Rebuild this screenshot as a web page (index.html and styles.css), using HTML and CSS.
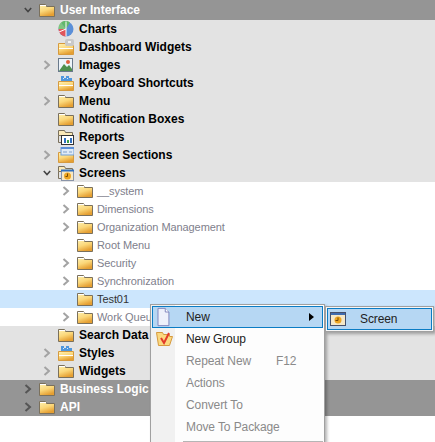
FILE: index.html
```html
<!DOCTYPE html>
<html>
<head>
	<title>User Interface</title>
	<link rel="stylesheet" href="styles.css">
</head>
<body>
	<svg class="defs" width="0" height="0">
		<defs>
			<linearGradient id="folderFill" x1="0" y1="0" x2="0.4" y2="1">
				<stop offset="0" stop-color="#fff2b4"/>
				<stop offset="0.55" stop-color="#fbd779"/>
				<stop offset="1" stop-color="#e59f32"/>
			</linearGradient>
			<symbol id="open" viewBox="0 0 8 10"><path d="M1.5 1 L6 5 L1.5 9" fill="none" stroke="#a3a3a3" stroke-width="2"/></symbol>
			<symbol id="openDark" viewBox="0 0 8 10"><path d="M1.5 1 L6 5 L1.5 9" fill="none" stroke="#555" stroke-width="2"/></symbol>
			<symbol id="down" viewBox="0 0 10 8"><path d="M1 1.5 L5 6 L9 1.5" fill="none" stroke="#444" stroke-width="2"/></symbol>
			<symbol id="folder" viewBox="0 0 16 16">
				<path d="M.5 2.5h6l1 2h8v10H.5z" fill="url(#folderFill)" stroke="#7a705c"/>
				<path d="M1 3.5h6" stroke="#fff" stroke-width="1"/>
			</symbol>
			<symbol id="charts" viewBox="0 0 16 16">
				<circle cx="8" cy="8" r="7.5" fill="#5b8fd8"/>
				<path d="M8 8 L3 1.5 A7.5 7.5 0 0 1 12 1.5z" fill="#62b86a"/>
				<path d="M8 8 L.5 8 A7.5 7.5 0 0 0 8 15.5z" fill="#e0565c"/>
				<path d="M8 8 L3 1.5 A7.5 7.5 0 0 0 .5 8z" fill="#7fc67f"/>
				<path d="M8 .5 L8 15.5 M8 8 L1 11" stroke="#fff" stroke-width="1"/>
			</symbol>
			<symbol id="widgets" viewBox="0 0 16 16">
				<path d="M.5 4.5h8v2h7v9H.5z" fill="url(#folderFill)" stroke="#d69a3e"/>
				<path d="M1 9.5h14" stroke="#fff"/>
				<rect x="7" y="0" width="9" height="7" rx="2" fill="#c9c9c9"/>
				<rect x="10" y="2" width="3" height="2" fill="#f4f4f4"/>
			</symbol>
			<symbol id="images" viewBox="0 0 16 16">
				<rect x=".5" y="1.5" width="14" height="13" fill="#eef4fa" stroke="#6a7a8c"/>
				<path d="M1 14 L6 7 L9 10 L11 8 L14 12 V14z" fill="#4f8f4f"/>
				<circle cx="10" cy="5" r="2" fill="#e0603c"/>
			</symbol>
			<symbol id="keys" viewBox="0 0 16 16">
				<path d="M.5 6.5h15v9H.5z" fill="url(#folderFill)" stroke="#d69a3e"/>
				<path d="M1 10.5h14" stroke="#fff"/>
				<path d="M3 1h3v2h2V1h3v2h3v3H3z" fill="#4f97dd"/>
				<path d="M5 3h1v1H5zM9 3h1v1H9z" fill="#d8ecff"/>
			</symbol>
			<symbol id="reports" viewBox="0 0 16 16">
				<path d="M.5 1.5h6l1 2h7v3H.5z" fill="#fbe9b8" stroke="#7a705c"/>
				<path d="M.5 6.5v7h3" fill="none" stroke="#7a705c"/>
				<rect x="3.5" y="6.5" width="12" height="9" fill="#fff" stroke="#333"/>
				<path d="M6 9h2v5H6z" fill="#2f6fc0"/><path d="M9 11h2v3H9z" fill="#3aa04a"/><path d="M12 9h2v5h-2z" fill="#2f6fc0"/>
			</symbol>
			<symbol id="sections" viewBox="0 0 16 16">
				<path d="M.5 5.5h15v10H.5z" fill="url(#folderFill)" stroke="#d69a3e"/>
				<rect x="3" y="0" width="13" height="8" fill="#dfeaf6" stroke="#6f9fd8"/>
				<path d="M3 1h13" stroke="#5b8fd8" stroke-width="2"/>
				<path d="M5 5h4M11 5h3" stroke="#7f9fc8"/>
			</symbol>
			<symbol id="screens" viewBox="0 0 16 16">
				<path d="M.5 1.5h6l1 2h7v3H.5z" fill="#fbe9b8" stroke="#7a705c"/>
				<path d="M.5 6.5v7h3" fill="none" stroke="#7a705c"/>
				<rect x="3.5" y="5.5" width="12" height="10" fill="#f9e8c0" stroke="#8a94a8"/>
				<path d="M3 5.5h13" stroke="#2f6fc0" stroke-width="2"/>
				<circle cx="9.5" cy="11" r="3.5" fill="#eda521"/>
				<path d="M9.5 8.5v3h-2" fill="none" stroke="#7a4a00"/>
			</symbol>
			<symbol id="page" viewBox="0 0 16 22">
				<path d="M2.5 1.5h8l4 4v15h-12z" fill="#eef1fb" stroke="#7a7fb8"/>
				<path d="M10.5 1.5v4h4" fill="#fff" stroke="#7a7fb8"/>
			</symbol>
			<symbol id="group" viewBox="0 0 18 16">
				<path d="M1.5 1.5h6l1 2h6v2h3l-3 9H3.5z" fill="#fbd980" stroke="#d69a3e"/>
				<path d="M6 7 L9 12 L14 2" fill="none" stroke="#e23a2a" stroke-width="2"/>
			</symbol>
			<symbol id="screenItem" viewBox="0 0 16 16">
				<rect x=".5" y="1.5" width="15" height="13" fill="#f5e8c8" stroke="#46506a"/>
				<path d="M1 3h14" stroke="#3f6cb0" stroke-width="2"/>
				<circle cx="8" cy="9" r="3.5" fill="#eda521"/>
				<path d="M8 6.5v3H5.5" fill="none" stroke="#7a4a00"/>
			</symbol>
		</defs>
	</svg>

	<div class="tree">
		<div class="row top head lvl0"><svg class="chev"><use href="#down"/></svg><svg class="icon"><use href="#folder"/></svg><span>User Interface</span></div>

		<div class="row sub lvl1"><span class="chev"></span><svg class="icon"><use href="#charts"/></svg><span>Charts</span></div>
		<div class="row sub lvl1"><span class="chev"></span><svg class="icon"><use href="#widgets"/></svg><span>Dashboard Widgets</span></div>
		<div class="row sub lvl1"><svg class="chev"><use href="#open"/></svg><svg class="icon"><use href="#images"/></svg><span>Images</span></div>
		<div class="row sub lvl1"><span class="chev"></span><svg class="icon"><use href="#keys"/></svg><span>Keyboard Shortcuts</span></div>
		<div class="row sub lvl1"><svg class="chev"><use href="#open"/></svg><svg class="icon"><use href="#folder"/></svg><span>Menu</span></div>
		<div class="row sub lvl1"><span class="chev"></span><svg class="icon"><use href="#folder"/></svg><span>Notification Boxes</span></div>
		<div class="row sub lvl1"><span class="chev"></span><svg class="icon"><use href="#reports"/></svg><span>Reports</span></div>
		<div class="row sub lvl1"><svg class="chev"><use href="#open"/></svg><svg class="icon"><use href="#sections"/></svg><span>Screen Sections</span></div>
		<div class="row sub lvl1"><svg class="chev"><use href="#down"/></svg><svg class="icon"><use href="#screens"/></svg><span>Screens</span></div>

		<div class="row item lvl2"><svg class="chev"><use href="#open"/></svg><svg class="icon"><use href="#folder"/></svg><span>__system</span></div>
		<div class="row item lvl2"><svg class="chev"><use href="#open"/></svg><svg class="icon"><use href="#folder"/></svg><span>Dimensions</span></div>
		<div class="row item lvl2"><svg class="chev"><use href="#open"/></svg><svg class="icon"><use href="#folder"/></svg><span>Organization Management</span></div>
		<div class="row item lvl2"><span class="chev"></span><svg class="icon"><use href="#folder"/></svg><span>Root Menu</span></div>
		<div class="row item lvl2"><svg class="chev"><use href="#open"/></svg><svg class="icon"><use href="#folder"/></svg><span>Security</span></div>
		<div class="row item lvl2"><svg class="chev"><use href="#open"/></svg><svg class="icon"><use href="#folder"/></svg><span>Synchronization</span></div>
		<div class="row item selected lvl2"><span class="chev"></span><svg class="icon"><use href="#folder"/></svg><span>Test01</span></div>
		<div class="row item lvl2"><svg class="chev"><use href="#open"/></svg><svg class="icon"><use href="#folder"/></svg><span>Work Queues</span></div>

		<div class="row sub lvl1"><span class="chev"></span><svg class="icon"><use href="#folder"/></svg><span>Search Data</span></div>
		<div class="row sub lvl1"><svg class="chev"><use href="#open"/></svg><svg class="icon"><use href="#keys"/></svg><span>Styles</span></div>
		<div class="row sub lvl1"><svg class="chev"><use href="#open"/></svg><svg class="icon"><use href="#folder"/></svg><span>Widgets</span></div>

		<div class="row head lvl0"><svg class="chev"><use href="#openDark"/></svg><svg class="icon"><use href="#folder"/></svg><span>Business Logic</span></div>
		<div class="row head lvl0"><svg class="chev"><use href="#openDark"/></svg><svg class="icon"><use href="#folder"/></svg><span>API</span></div>
	</div>

	<div class="menu">
		<div class="menu-item active">
			<svg class="menu-icon page"><use href="#page"/></svg>
			<span class="menu-label">New</span>
			<span class="arrow"></span>
		</div>
		<div class="menu-item">
			<svg class="menu-icon"><use href="#group"/></svg>
			<span class="menu-label">New Group</span>
		</div>
		<div class="menu-item disabled">
			<span class="menu-icon"></span>
			<span class="menu-label">Repeat New</span>
			<span class="shortcut">F12</span>
		</div>
		<div class="menu-item disabled"><span class="menu-icon"></span><span class="menu-label">Actions</span></div>
		<div class="menu-item disabled"><span class="menu-icon"></span><span class="menu-label">Convert To</span></div>
		<div class="menu-item disabled"><span class="menu-icon"></span><span class="menu-label">Move To Package</span></div>
		<div class="menu-sep"></div>
	</div>

	<div class="menu submenu">
		<div class="menu-item active">
			<svg class="menu-icon"><use href="#screenItem"/></svg>
			<span class="menu-label">Screen</span>
		</div>
	</div>
</body>
</html>
```

FILE: styles.css
```css
html, body {
	margin: 0;
	padding: 0;
	height: 442px;
	overflow: hidden;
	background-color: #fff;
}

body {
	position: relative;
	font-family: "Liberation Sans", Arial, sans-serif;
	font-size: 12px;
}

.defs {
	position: absolute;
}

.row {
	display: flex;
	align-items: center;
	height: 18px;
	white-space: nowrap;
}

.top {
	height: 20px;
}

.lvl0 {
	padding-left: 24px;
}

.lvl1 {
	padding-left: 43px;
}

.lvl2 {
	padding-left: 62px;
}

.chev {
	flex: none;
	width: 8px;
	height: 10px;
	margin-right: 7px;
}

.icon {
	flex: none;
	width: 16px;
	height: 16px;
	margin-right: 5px;
}

.lvl2 .icon {
	margin-right: 4px;
}

.head {
	background-color: #959595;
	color: #fff;
	font-weight: bold;
}

.sub {
	background-color: #e3e3e3;
	color: #000;
	font-weight: bold;
}

.item {
	color: #80808c;
	font-size: 11px;
	letter-spacing: -0.08px;
}

.selected {
	background-color: #cce6fd;
	color: #333;
}

.menu {
	position: absolute;
	left: 150px;
	top: 304px;
	width: 171px;
	padding: 1px;
	border: 1px solid #a0a0a0;
	background: linear-gradient(to right, #f1f1f1 24px, #fdfdfd 24px);
	box-shadow: 2px 2px 3px rgba(0, 0, 0, 0.3);
	letter-spacing: -0.1px;
}

.submenu {
	left: 325px;
	top: 306px;
	width: 105px;
	background: #f6f6f6;
}

.menu-item {
	display: flex;
	align-items: center;
	height: 22px;
	box-sizing: border-box;
	padding-left: 3px;
	color: #222;
}

.active {
	border: 1px solid #0b7cc4;
	padding-left: 2px;
	background-color: #b6d7f3;
}

.disabled {
	color: #8a8a8a;
}

.menu-icon {
	flex: none;
	width: 18px;
	height: 16px;
	margin-right: 13px;
}

.page {
	width: 16px;
	height: 20px;
	margin-right: 15px;
}

.menu-label {
	flex: none;
}

.shortcut {
	margin-left: 25px;
}

.arrow {
	margin-left: auto;
	margin-right: 8px;
	border-left: 5px solid #000;
	border-top: 4px solid transparent;
	border-bottom: 4px solid transparent;
}

.submenu .menu-icon {
	width: 16px;
	margin-right: 14px;
}

.menu-sep {
	height: 1px;
	margin: 3px 0 0 31px;
	background-color: #b5b5b5;
}
```
